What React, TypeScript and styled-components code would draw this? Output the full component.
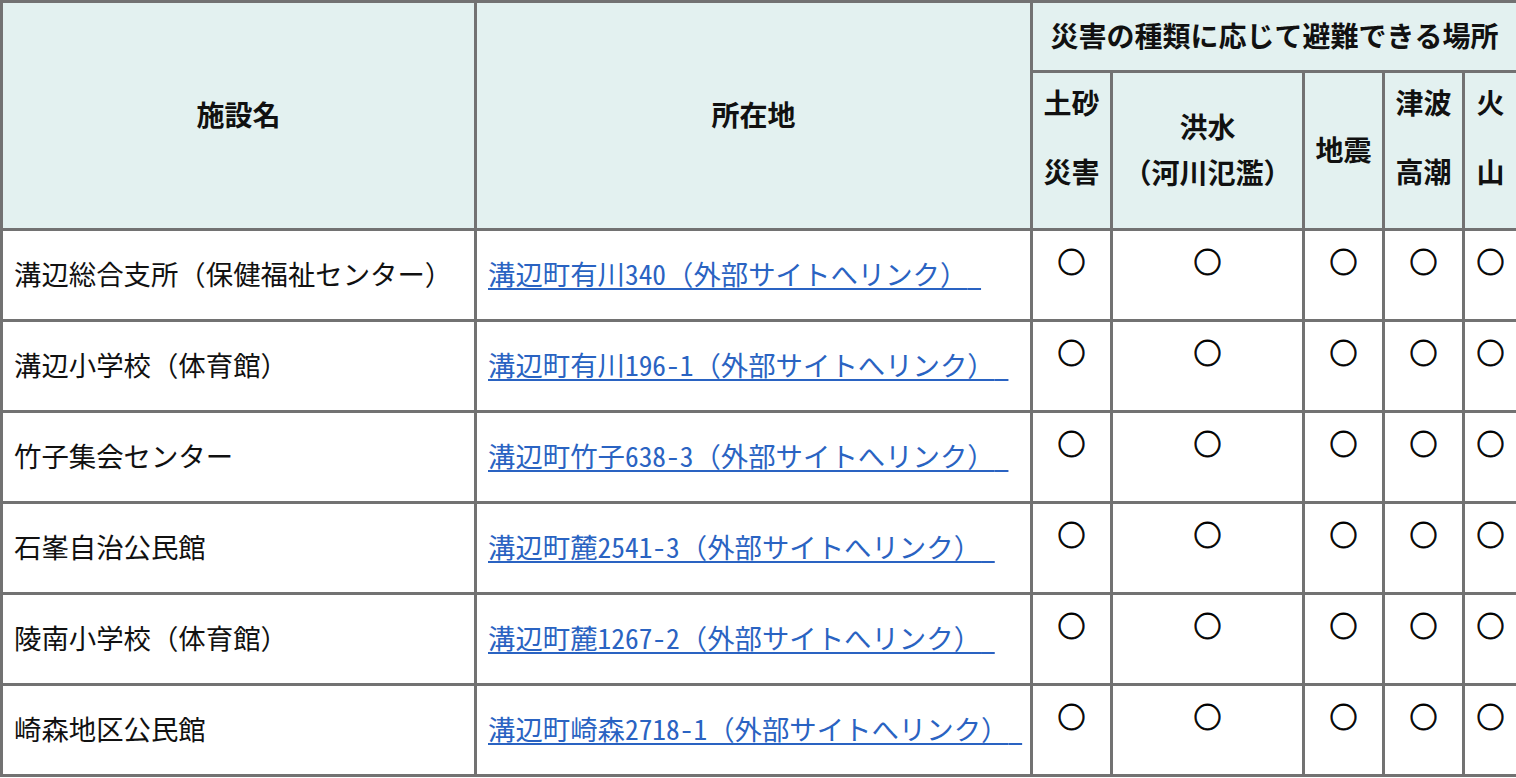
import React from "react";
import styled, { createGlobalStyle } from "styled-components";

const Global = createGlobalStyle`
  html, body { margin: 0; padding: 0; background: #fff; }
  body {
    font-family: "Noto Sans Mono CJK JP", "Noto Sans CJK JP", "Noto Sans", sans-serif;
    color: #111;
  }
`;

const Table = styled.table`
  width: 1516px;
  table-layout: fixed;
  border-collapse: collapse;
  font-size: 27.4px;
  border: 3px solid #666;
`;

const Row = styled.tr<{ $h: number }>`
  height: ${(p) => p.$h}px;
`;

const HeadCell = styled.th<{ $top?: boolean }>`
  background: #e3f1f0;
  border: 3px solid #727272;
  font-size: 28px;
  font-weight: 700;
  text-align: center;
  vertical-align: ${(p) => (p.$top ? "top" : "middle")};
  padding: ${(p) => (p.$top ? "6px 0 0" : "0 0 4px")};
  line-height: 46px;
`;

const Line = styled.span<{ $gap?: number }>`
  display: block;
  height: 46px;
  line-height: 46px;
  white-space: nowrap;
  margin-top: ${(p) => p.$gap ?? 0}px;
`;

const Cell = styled.td<{ $mark?: boolean }>`
  border: 3px solid #727272;
  padding: ${(p) => (p.$mark ? "10px 0 0" : "0 0 4px 11px")};
  text-align: ${(p) => (p.$mark ? "center" : "left")};
  vertical-align: ${(p) => (p.$mark ? "top" : "middle")};
  line-height: 40px;
  white-space: nowrap;
`;

const Mark = styled.span`
  font-family: "Noto Sans CJK JP", sans-serif;
  font-weight: 700;
  font-size: 28px;
  color: #000;
  -webkit-text-stroke: 0.8px #000;
`;

const Link = styled.a`
  color: #2a63c2;
  text-decoration: underline;
  text-decoration-thickness: 2px;
  text-underline-offset: 3px;
`;

const rows = [
  ["溝辺総合支所（保健福祉センター）", "溝辺町有川340（外部サイトへリンク）"],
  ["溝辺小学校（体育館）", "溝辺町有川196-1（外部サイトへリンク）"],
  ["竹子集会センター", "溝辺町竹子638-3（外部サイトへリンク）"],
  ["石峯自治公民館", "溝辺町麓2541-3（外部サイトへリンク）"],
  ["陵南小学校（体育館）", "溝辺町麓1267-2（外部サイトへリンク）"],
  ["崎森地区公民館", "溝辺町崎森2718-1（外部サイトへリンク）"],
];

export default function App() {
  return (
    <>
      <Global />
      <Table>
        <colgroup>
          <col style={{ width: 474 }} />
          <col style={{ width: 556 }} />
          <col style={{ width: 80 }} />
          <col style={{ width: 192 }} />
          <col style={{ width: 80 }} />
          <col style={{ width: 80 }} />
          <col style={{ width: 54 }} />
        </colgroup>
        <thead>
          <Row $h={70}>
            <HeadCell rowSpan={2}>施設名</HeadCell>
            <HeadCell rowSpan={2}>所在地</HeadCell>
            <HeadCell colSpan={5}>災害の種類に応じて避難できる場所</HeadCell>
          </Row>
          <Row $h={158}>
            <HeadCell $top>
              <Line>土砂</Line>
              <Line $gap={23}>災害</Line>
            </HeadCell>
            <HeadCell>
              <Line>洪水</Line>
              <Line>（河川氾濫）</Line>
            </HeadCell>
            <HeadCell>地震</HeadCell>
            <HeadCell $top>
              <Line>津波</Line>
              <Line $gap={23}>高潮</Line>
            </HeadCell>
            <HeadCell $top>
              <Line>火</Line>
              <Line $gap={23}>山</Line>
            </HeadCell>
          </Row>
        </thead>
        <tbody>
          {rows.map(([name, addr]) => (
            <Row $h={91} key={name}>
              <Cell>{name}</Cell>
              <Cell>
                <Link href="#">{addr}{"\u00a0"}</Link>
              </Cell>
              {[0, 1, 2, 3, 4].map((i) => (
                <Cell key={i} $mark>
                  <Mark>○</Mark>
                </Cell>
              ))}
            </Row>
          ))}
        </tbody>
      </Table>
    </>
  );
}
